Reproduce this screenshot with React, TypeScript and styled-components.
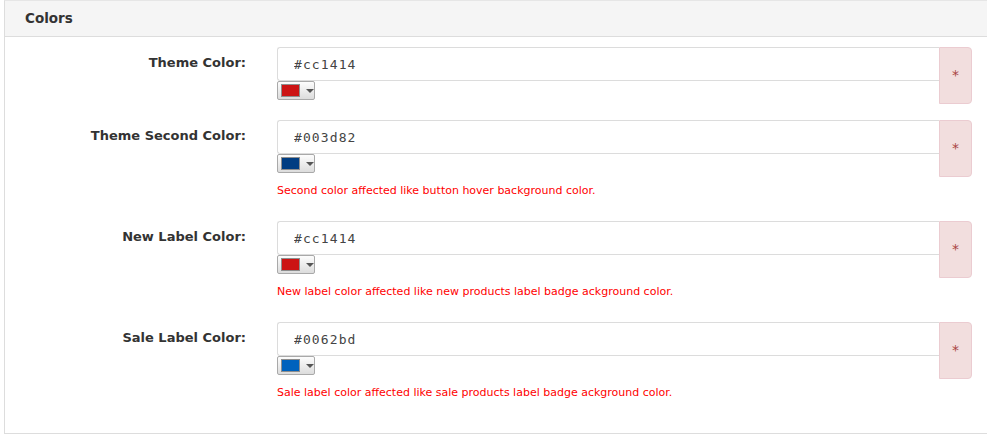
import styled, { createGlobalStyle } from "styled-components";

const GlobalStyle = createGlobalStyle`
  html, body {
    margin: 0;
    padding: 0;
    background: #fff;
    overflow: hidden;
  }
  body {
    font-family: "DejaVu Sans", Verdana, sans-serif;
    color: #333;
  }
`;

const fields = [
  { label: "Theme Color:", value: "#cc1414", help: "" },
  {
    label: "Theme Second Color:",
    value: "#003d82",
    help: "Second color affected like button hover background color.",
  },
  {
    label: "New Label Color:",
    value: "#cc1414",
    help: "New label color affected like new products label badge ackground color.",
  },
  {
    label: "Sale Label Color:",
    value: "#0062bd",
    help: "Sale label color affected like sale products label badge ackground color.",
  },
];

export default function App() {
  return (
    <>
      <GlobalStyle />
      <Panel>
        <Heading>Colors</Heading>
        <Body>
          {fields.map((f) => (
            <FormRow key={f.label}>
              <Label>{f.label}</Label>
              <div>
                <InputGroup>
                  <Field>
                    <TextInput defaultValue={f.value} readOnly />
                    <Picker>
                      <Swatch $color={f.value} />
                      <Caret />
                    </Picker>
                  </Field>
                  <Addon>*</Addon>
                </InputGroup>
                {f.help && <Help>{f.help}</Help>}
              </div>
            </FormRow>
          ))}
        </Body>
      </Panel>
    </>
  );
}

const Panel = styled.div`
  margin: 0 -20px 0 4px;
  border: 1px solid #dddddd;
  border-top-color: #e6e6e6;
  background: #fff;
`;

const Heading = styled.div`
  height: 35px;
  line-height: 35px;
  padding-left: 20px;
  background: #f5f5f5;
  border-bottom: 1px solid #dddddd;
  font-size: 13.5px;
  font-weight: bold;
  color: #333;
`;

const Body = styled.div`
  padding: 10px 0 26px;
`;

const FormRow = styled.div`
  display: grid;
  grid-template-columns: 241px 695px;
  column-gap: 31px;
  margin-bottom: 16px;

  &:last-child {
    margin-bottom: 0;
  }
`;

const Label = styled.label`
  text-align: right;
  font-size: 13px;
  font-weight: bold;
  line-height: 17px;
  padding-top: 7px;
  color: #333;
`;

const InputGroup = styled.div`
  display: flex;
  align-items: stretch;
`;

const Field = styled.div`
  flex: 1;
  display: flex;
  flex-direction: column;
  align-items: flex-start;
  padding-bottom: 4px;
`;

const TextInput = styled.input`
  box-sizing: border-box;
  width: 100%;
  height: 34px;
  margin: 0;
  padding: 0 16px;
  border: 1px solid #dcdcdc;
  border-right: none;
  border-radius: 3px 0 0 3px;
  font-family: "DejaVu Sans Mono", monospace;
  font-size: 13px;
  letter-spacing: 1.1px;
  color: #444;
  outline: none;
  background: #fff;
`;

const Picker = styled.div`
  box-sizing: border-box;
  width: 38px;
  height: 19px;
  display: flex;
  align-items: center;
  gap: 6px;
  padding-left: 3px;
  border: 1px solid #a9a9a9;
  border-radius: 2px;
  background: linear-gradient(#fdfdfd, #dcdcdc);
`;

const Swatch = styled.span<{ $color: string }>`
  box-sizing: border-box;
  width: 21px;
  height: 13px;
  border: 1px solid #8e8e8e;
  background: ${(p) => p.$color};
`;

const Caret = styled.span`
  width: 0;
  height: 0;
  border-left: 4px solid transparent;
  border-right: 4px solid transparent;
  border-top: 4px solid #555;
`;

const Addon = styled.div`
  box-sizing: border-box;
  width: 33px;
  display: flex;
  align-items: center;
  justify-content: center;
  background: #f2dede;
  border: 1px solid #ebccd1;
  border-radius: 0 4px 4px 0;
  color: #a94442;
  font-size: 14px;
  padding-bottom: 2px;
`;

const Help = styled.div`
  margin: 6px 0 6px;
  font-family: "DejaVu Sans", sans-serif;
  font-size: 11px;
  line-height: 16px;
  color: #ff0000;
`;
